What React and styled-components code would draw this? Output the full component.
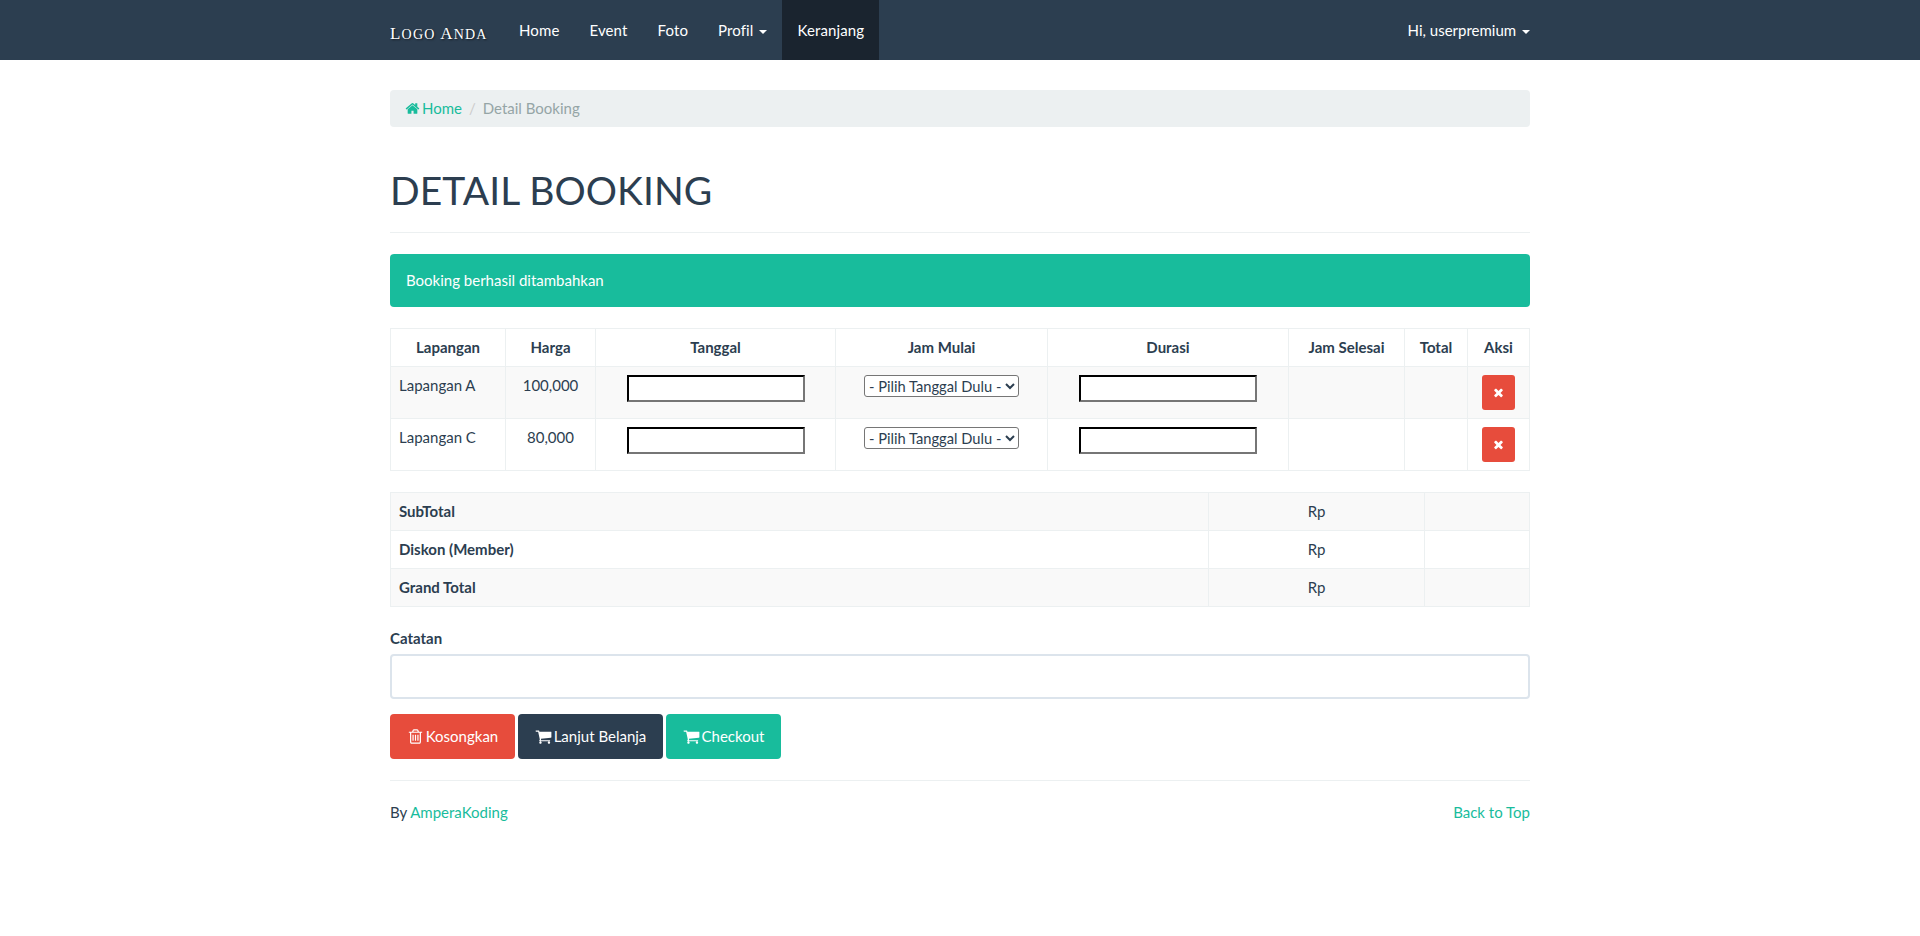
import React from "react";
import styled, { createGlobalStyle } from "styled-components";

const GlobalStyle = createGlobalStyle`
  * {
    box-sizing: border-box;
  }
  body {
    margin: 0;
    background: #fff;
    color: #2c3e50;
    font-family: Lato, "Open Sans", sans-serif;
    font-size: 15px;
    line-height: 21.43px;
  }
`;

const bookingColumns = [115, 90, 240, 212, 241, 116, 63, 62];
const summaryColumns = [818, 216, 105];

// font awesome 4 glyphs, 1792 grid
const icons = {
  home: "M1472 992v480q0 26-19 45t-45 19h-384v-384h-256v384h-384q-26 0-45-19t-19-45v-480q0-1 .5-3t.5-3l575-474 575 474q1 2 1 6zm223-69l-62 74q-8 9-21 11h-3q-13 0-21-7l-692-577-692 577q-12 8-24 7-13-2-21-11l-62-74q-8-10-7-23.5t11-21.5l719-599q32-26 76-26t76 26l244 204v-195q0-14 9-23t23-9h192q14 0 23 9t9 23v408l219 182q10 8 11 21.5t-7 23.5z",
  cart: "M704 1536q0 52-38 90t-90 38-90-38-38-90 38-90 90-38 90 38 38 90zm896 0q0 52-38 90t-90 38-90-38-38-90 38-90 90-38 90 38 38 90zm128-1088v512q0 24-16.5 42.5t-40.5 21.5l-1044 122q13 60 13 70 0 16-24 64h920q26 0 45 19t19 45-19 45-45 19h-1024q-26 0-45-19t-19-45q0-11 8-31.5t16-36 21.5-40 15.5-29.5l-177-823h-204q-26 0-45-19t-19-45 19-45 45-19h256q16 0 28.5 6.5t19.5 15.5 13 24.5 8 26 5.5 29.5 4.5 26h1201q26 0 45 19t19 45z",
  trash: "M704 736v576q0 14-9 23t-23 9h-64q-14 0-23-9t-9-23v-576q0-14 9-23t23-9h64q14 0 23 9t9 23zm256 0v576q0 14-9 23t-23 9h-64q-14 0-23-9t-9-23v-576q0-14 9-23t23-9h64q14 0 23 9t9 23zm256 0v576q0 14-9 23t-23 9h-64q-14 0-23-9t-9-23v-576q0-14 9-23t23-9h64q14 0 23 9t9 23zm128 724v-948h-896v948q0 22 7 40.5t14.5 27 10.5 8.5h832q3 0 10.5-8.5t14.5-27 7-40.5zm-672-1076h448l-48-117q-7-9-17-11h-317q-10 2-17 11zm928 32v64q0 14-9 23t-23 9h-96v948q0 83-47 143.5t-113 60.5h-832q-66 0-113-58.5t-47-141.5v-952h-96q-14 0-23-9t-9-23v-64q0-14 9-23t23-9h309l70-167q15-37 54-63t79-26h320q40 0 79 26t54 63l70 167h309q14 0 23 9t9 23z",
  times: "M1490 1322q0 40-28 68l-136 136q-28 28-68 28t-68-28l-294-294-294 294q-28 28-68 28t-68-28l-136-136q-28-28-28-68t28-68l294-294-294-294q-28-28-28-68t28-68l136-136q28-28 68-28t68 28l294 294 294-294q28-28 68-28t68 28l136 136q28 28 28 68t-28 68l-294 294 294 294q28 28 28 68z",
};

const Glyph = ({ name, size, className }) => (
  <svg className={className} width={size} height={size} viewBox="0 0 1792 1792" fill="currentColor">
    <path d={icons[name]} />
  </svg>
);

const Navbar = styled.nav`
  height: 60px;
  background: #2c3e50;
`;
const Container = styled.div`
  width: 1170px;
  margin: 0 auto;
  padding: 0 15px;
`;
const NavInner = styled(Container)`
  display: flex;
  justify-content: space-between;
`;
const NavLeft = styled.div`
  display: flex;
`;
const Brand = styled.a`
  width: 114px;
  padding-top: 23px;
  color: #fff;
  font-family: "Liberation Serif", serif;
  font-size: 14px;
  letter-spacing: 1.2px;
  text-shadow: 1px 1px 2px rgba(0, 0, 0, 0.6);
  white-space: nowrap;
`;
const BrandInitial = styled.span`
  font-size: 17px;
`;
const NavLink = styled.a`
  display: block;
  height: 60px;
  padding: 20px 15px;
  color: #fff;
  letter-spacing: 0.12px;
  background: ${(p) => (p.$active ? "#1a242f" : "transparent")};
  white-space: nowrap;
`;
const NavRight = styled(NavLink)`
  margin-right: -15px;
  letter-spacing: 0;
`;
const Caret = styled.span`
  display: inline-block;
  width: 0;
  height: 0;
  margin-left: 2px;
  vertical-align: middle;
  border-top: 4px solid #fff;
  border-left: 4px solid transparent;
  border-right: 4px solid transparent;
`;
const Breadcrumb = styled.div`
  display: flex;
  align-items: center;
  height: 37px;
  margin-top: 30px;
  padding: 0 15px;
  background: #ecf0f1;
  border-radius: 4px;
`;
const Link = styled.a`
  color: #18bc9c;
`;
const HomeIcon = styled(Glyph)`
  margin-right: 2px;
  vertical-align: -2px;
`;
const Separator = styled.span`
  padding: 0 7px;
  color: #ccc;
`;
const Current = styled.span`
  color: #95a5a6;
`;
const PageHeader = styled.div`
  margin: 42px 0 21px;
  padding-bottom: 20px;
  border-bottom: 1px solid #ecf0f1;
`;
const Title = styled.h1`
  margin: 0;
  font-size: 39px;
  line-height: 43px;
  font-weight: 400;
  letter-spacing: 0.08px;
  color: #2c3e50;
`;
const Alert = styled.div`
  height: 53px;
  margin-bottom: 21px;
  padding: 16px;
  background: #18bc9c;
  border-radius: 4px;
  color: #fff;
`;
const Table = styled.table`
  width: 1139px;
  margin-bottom: 21px;
  table-layout: fixed;
  border-collapse: collapse;
  border: 1px solid #ecf0f1;
`;
const Th = styled.th`
  height: 38px;
  padding: 8px;
  border: 1px solid #ecf0f1;
  line-height: 21px;
  font-weight: 700;
  text-align: center;
  vertical-align: top;
`;
const Row = styled.tr`
  background: ${(p) => (p.$striped ? "#f9f9f9" : "#fff")};
`;
const Td = styled.td`
  height: ${(p) => (p.$tall ? "52px" : "38px")};
  padding: 8px;
  border: 1px solid #ecf0f1;
  line-height: 21px;
  text-align: ${(p) => (p.$center ? "center" : "left")};
  font-weight: ${(p) => (p.$bold ? 700 : 400)};
  vertical-align: top;
`;
const BlankInput = styled.input`
  display: block;
  width: 178px;
  height: 27px;
  margin: 0 auto;
  padding: 1px 2px;
  background: #fff;
  border-width: 2px;
  border-style: inset;
  border-color: #1f1f1f #767676 #767676 #1f1f1f;
  border-radius: 0;
`;
const DateSelect = styled.select`
  display: block;
  width: 155px;
  height: 22px;
  margin: 0 auto;
  background: #fff;
  border: 1px solid #767676;
  border-radius: 3px;
  color: #2c3e50;
  font-family: Lato, sans-serif;
  font-size: 14.7px;
`;
const RemoveButton = styled.button`
  display: flex;
  align-items: center;
  justify-content: center;
  width: 33px;
  height: 35px;
  margin: 0 auto;
  padding: 0;
  background: #e74c3c;
  border: none;
  border-radius: 3px;
  color: #fff;
`;
const Label = styled.label`
  display: block;
  margin-bottom: 5px;
  font-weight: 700;
`;
const NoteInput = styled.input`
  display: block;
  width: 100%;
  height: 45px;
  margin-bottom: 15px;
  background: #fff;
  border: 2px solid #dce4ec;
  border-radius: 4px;
`;
const Actions = styled.div`
  display: flex;
  gap: 3px;
`;
const Button = styled.a`
  display: flex;
  align-items: center;
  justify-content: center;
  gap: 2px;
  width: ${(p) => p.$width}px;
  height: 45px;
  background: ${(p) => p.$color};
  border-radius: 4px;
  color: #fff;
`;
const Divider = styled.hr`
  margin: 21px 0;
  border: 0;
  border-top: 1px solid #ecf0f1;
`;
const Footer = styled.div`
  display: flex;
  justify-content: space-between;
`;

const bookings = [
  { name: "Lapangan A", price: "100,000", striped: true },
  { name: "Lapangan C", price: "80,000", striped: false },
];
const headers = ["Lapangan", "Harga", "Tanggal", "Jam Mulai", "Durasi", "Jam Selesai", "Total", "Aksi"];
const summary = ["SubTotal", "Diskon (Member)", "Grand Total"];

const App = () => {
  return (
    <>
      <GlobalStyle />
      <Navbar>
        <NavInner>
          <NavLeft>
            <Brand>
              <BrandInitial>L</BrandInitial>OGO <BrandInitial>A</BrandInitial>NDA
            </Brand>
            <NavLink>Home</NavLink>
            <NavLink>Event</NavLink>
            <NavLink>Foto</NavLink>
            <NavLink>
              Profil <Caret />
            </NavLink>
            <NavLink $active>Keranjang</NavLink>
          </NavLeft>
          <NavRight>
            Hi, userpremium <Caret />
          </NavRight>
        </NavInner>
      </Navbar>
      <Container>
        <Breadcrumb>
          <Link>
            <HomeIcon name="home" size={15} />
            Home
          </Link>
          <Separator>/</Separator>
          <Current>Detail Booking</Current>
        </Breadcrumb>
        <PageHeader>
          <Title>DETAIL BOOKING</Title>
        </PageHeader>
        <Alert>Booking berhasil ditambahkan</Alert>
        <Table>
          <colgroup>
            {bookingColumns.map((w, i) => (
              <col key={i} width={w} />
            ))}
          </colgroup>
          <thead>
            <tr>
              {headers.map((h) => (
                <Th key={h}>{h}</Th>
              ))}
            </tr>
          </thead>
          <tbody>
            {bookings.map((b) => (
              <Row key={b.name} $striped={b.striped}>
                <Td $tall>{b.name}</Td>
                <Td $tall $center>{b.price}</Td>
                <Td $tall><BlankInput /></Td>
                <Td $tall>
                  <DateSelect>
                    <option>- Pilih Tanggal Dulu -</option>
                  </DateSelect>
                </Td>
                <Td $tall><BlankInput /></Td>
                <Td $tall />
                <Td $tall />
                <Td $tall>
                  <RemoveButton>
                    <Glyph name="times" size={13} />
                  </RemoveButton>
                </Td>
              </Row>
            ))}
          </tbody>
        </Table>
        <Table>
          <colgroup>
            {summaryColumns.map((w, i) => (
              <col key={i} width={w} />
            ))}
          </colgroup>
          <tbody>
            {summary.map((s, i) => (
              <Row key={s} $striped={i % 2 === 0}>
                <Td $bold>{s}</Td>
                <Td $center>Rp</Td>
                <Td />
              </Row>
            ))}
          </tbody>
        </Table>
        <Label>Catatan</Label>
        <NoteInput />
        <Actions>
          <Button $width={125} $color="#e74c3c">
            <Glyph name="trash" size={17} />
            Kosongkan
          </Button>
          <Button $width={145} $color="#2c3e50">
            <Glyph name="cart" size={17} />
            Lanjut Belanja
          </Button>
          <Button $width={115} $color="#18bc9c">
            <Glyph name="cart" size={17} />
            Checkout
          </Button>
        </Actions>
        <Divider />
        <Footer>
          <span>
            By <Link>AmperaKoding</Link>
          </span>
          <Link>Back to Top</Link>
        </Footer>
      </Container>
    </>
  );
};

export default App;
